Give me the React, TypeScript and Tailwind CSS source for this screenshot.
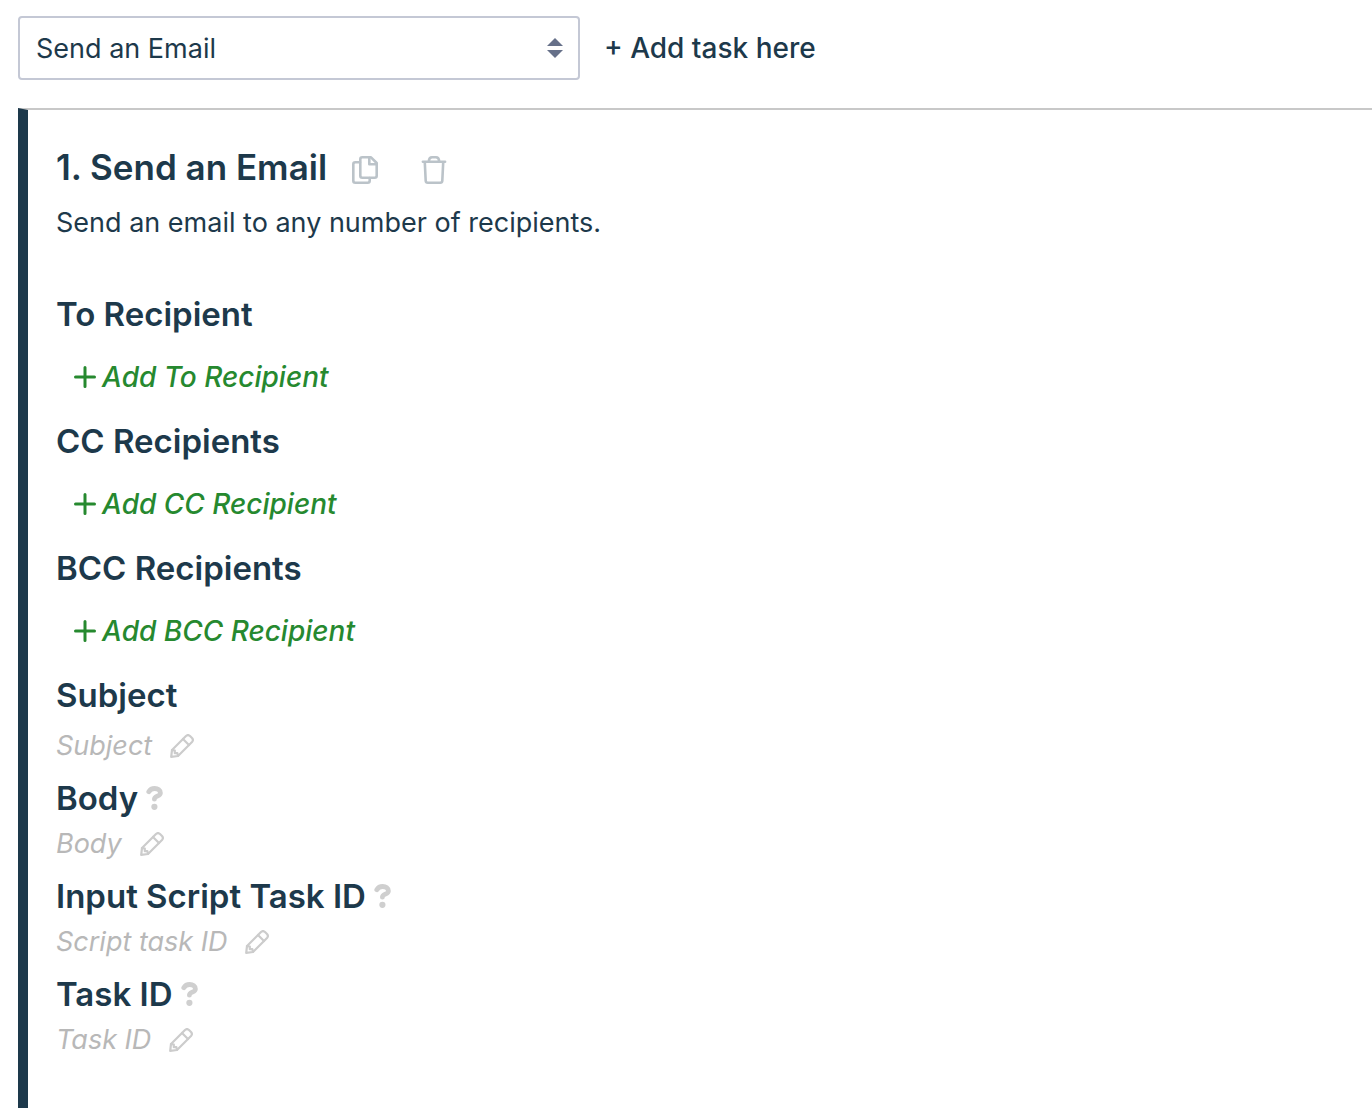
import type { ReactNode } from "react";

function CopyIcon() {
  return (
    <svg width="26" height="28" viewBox="0 0 26 28" fill="none" stroke="currentColor" strokeWidth="2.6" strokeLinejoin="round" strokeLinecap="round" aria-hidden="true">
      <path d="M8 6.3H3.3Q1.3 6.3 1.3 8.3V24.7Q1.3 26.7 3.3 26.7H15.7Q17.7 26.7 17.7 24.7V22" />
      <path d="M10.3 1.3H19L24.7 7V19.7Q24.7 21.7 22.7 21.7H10.3Q8.3 21.7 8.3 19.7V3.3Q8.3 1.3 10.3 1.3Z" />
      <path d="M17.3 2V8.2H24" />
    </svg>
  );
}

function TrashIcon() {
  return (
    <svg width="26" height="28" viewBox="0 0 26 28" fill="none" stroke="currentColor" strokeWidth="2.6" strokeLinejoin="round" strokeLinecap="round" aria-hidden="true">
      <path d="M1.9 5.8H24.1" />
      <path d="M7.8 5.5C8 2.8 9.2 1.3 11 1.3H15C16.8 1.3 18 2.8 18.2 5.5" />
      <path d="M3.8 6.5L4.7 24.8Q4.9 26.7 6.7 26.7H19.3Q21.1 26.7 21.3 24.8L22.2 6.5" />
    </svg>
  );
}

function PencilIcon() {
  return (
    <svg width="24" height="24" viewBox="0 0 24 24" fill="none" stroke="currentColor" strokeWidth="2.2" strokeLinejoin="round" strokeLinecap="round" aria-hidden="true">
      <path d="M1.2 22.8L2 16L16 2Q18 0.2 20 2L22 4Q23.8 6 22 8L8 22Z" />
      <path d="M13 5L19 11" />
      <path d="M2 16L4.8 16.6V19.2H7.4L8 22" />
    </svg>
  );
}

function QuestionIcon() {
  return (
    <svg width="18" height="24" viewBox="0 0 18 24" fill="none" stroke="currentColor" aria-hidden="true">
      <path d="M2.8 5.8C4.2 3.4 6 2.5 8.6 2.5C12 2.5 14.4 4.2 14.4 6.9C14.4 10.4 8.4 10 8.4 13.2" strokeWidth="4.8" strokeLinecap="round" />
      <circle cx="8.4" cy="20.8" r="3.1" fill="currentColor" stroke="none" />
    </svg>
  );
}

function PlusIcon() {
  return (
    <svg width="22" height="22" viewBox="0 0 22 22" fill="none" stroke="currentColor" strokeWidth="3" strokeLinecap="round" aria-hidden="true">
      <path d="M11 1.5V20.5M1.5 11H20.5" />
    </svg>
  );
}

function SectionTitle({ children, help }: { children: ReactNode; help?: boolean }) {
  return (
    <div className="flex h-11 items-center gap-2">
      <h3 className="text-[33px] leading-[44px] font-semibold">{children}</h3>
      {help && (
        <button type="button" aria-label={`Help for ${children}`} className="text-[#cfcfcf]">
          <QuestionIcon />
        </button>
      )}
    </div>
  );
}

function RecipientSection({ title, action }: { title: string; action: string }) {
  return (
    <section className="mb-[21px]">
      <SectionTitle>{title}</SectionTitle>
      <button type="button" className="mt-5 ml-[18px] flex h-[42px] items-center gap-1.5 text-[28px] font-medium text-[#26892f] italic">
        <PlusIcon />
        {action}
      </button>
    </section>
  );
}

function FieldSection({ title, placeholder, help }: { title: string; placeholder: string; help?: boolean }) {
  return (
    <section className="mb-2.5">
      <SectionTitle help={help}>{title}</SectionTitle>
      <button type="button" className={`${help ? "mt-1" : "mt-[9px]"} flex h-10 items-center gap-[18px] text-[27px] text-[#b8b8b8] italic`}>
        {placeholder}
        <span className="text-[#cccccc]">
          <PencilIcon />
        </span>
      </button>
    </section>
  );
}

export default function App() {
  return (
    <main className="flex min-h-screen flex-col bg-white pt-4 pl-[18px] font-['Inter','Liberation_Sans',sans-serif] text-[27px] text-[#1d394b]">
      <div className="flex items-center gap-6">
        <div className="relative w-[562px]">
          <select aria-label="Task type" defaultValue="email" className="h-16 w-full appearance-none rounded-[4px] border-2 border-[#c4c8d5] bg-white px-4 pt-0.5">
            <option value="email">Send an Email</option>
          </select>
          <svg className="pointer-events-none absolute top-[22px] right-[17px]" width="16" height="20" viewBox="0 0 16 20" fill="#667089" aria-hidden="true">
            <path d="M8 0L16 8H0ZM0 12H16L8 20Z" />
          </svg>
        </div>
        <button type="button" className="text-[28px] font-medium">+ Add task here</button>
      </div>
      <article className="mt-7 flex-1 border-t-2 border-l-[10px] border-t-[#c8c8c8] border-l-[#1d394b] pt-[35px] pb-9 pl-7">
        <header className="mb-[49px]">
          <div className="flex h-11 items-center">
            <h2 className="text-[35px] leading-[44px] font-semibold">1. Send an Email</h2>
            <div className="mt-1.5 ml-[25px] flex gap-[43px] text-[#bbc3c9]">
              <button type="button" aria-label="Duplicate task"><CopyIcon /></button>
              <button type="button" aria-label="Delete task"><TrashIcon /></button>
            </div>
          </div>
          <p className="mt-3.5 leading-10">Send an email to any number of recipients.</p>
        </header>
        <RecipientSection title="To Recipient" action="Add To Recipient" />
        <RecipientSection title="CC Recipients" action="Add CC Recipient" />
        <RecipientSection title="BCC Recipients" action="Add BCC Recipient" />
        <FieldSection title="Subject" placeholder="Subject" />
        <FieldSection title="Body" placeholder="Body" help />
        <FieldSection title="Input Script Task ID" placeholder="Script task ID" help />
        <FieldSection title="Task ID" placeholder="Task ID" help />
      </article>
    </main>
  );
}
